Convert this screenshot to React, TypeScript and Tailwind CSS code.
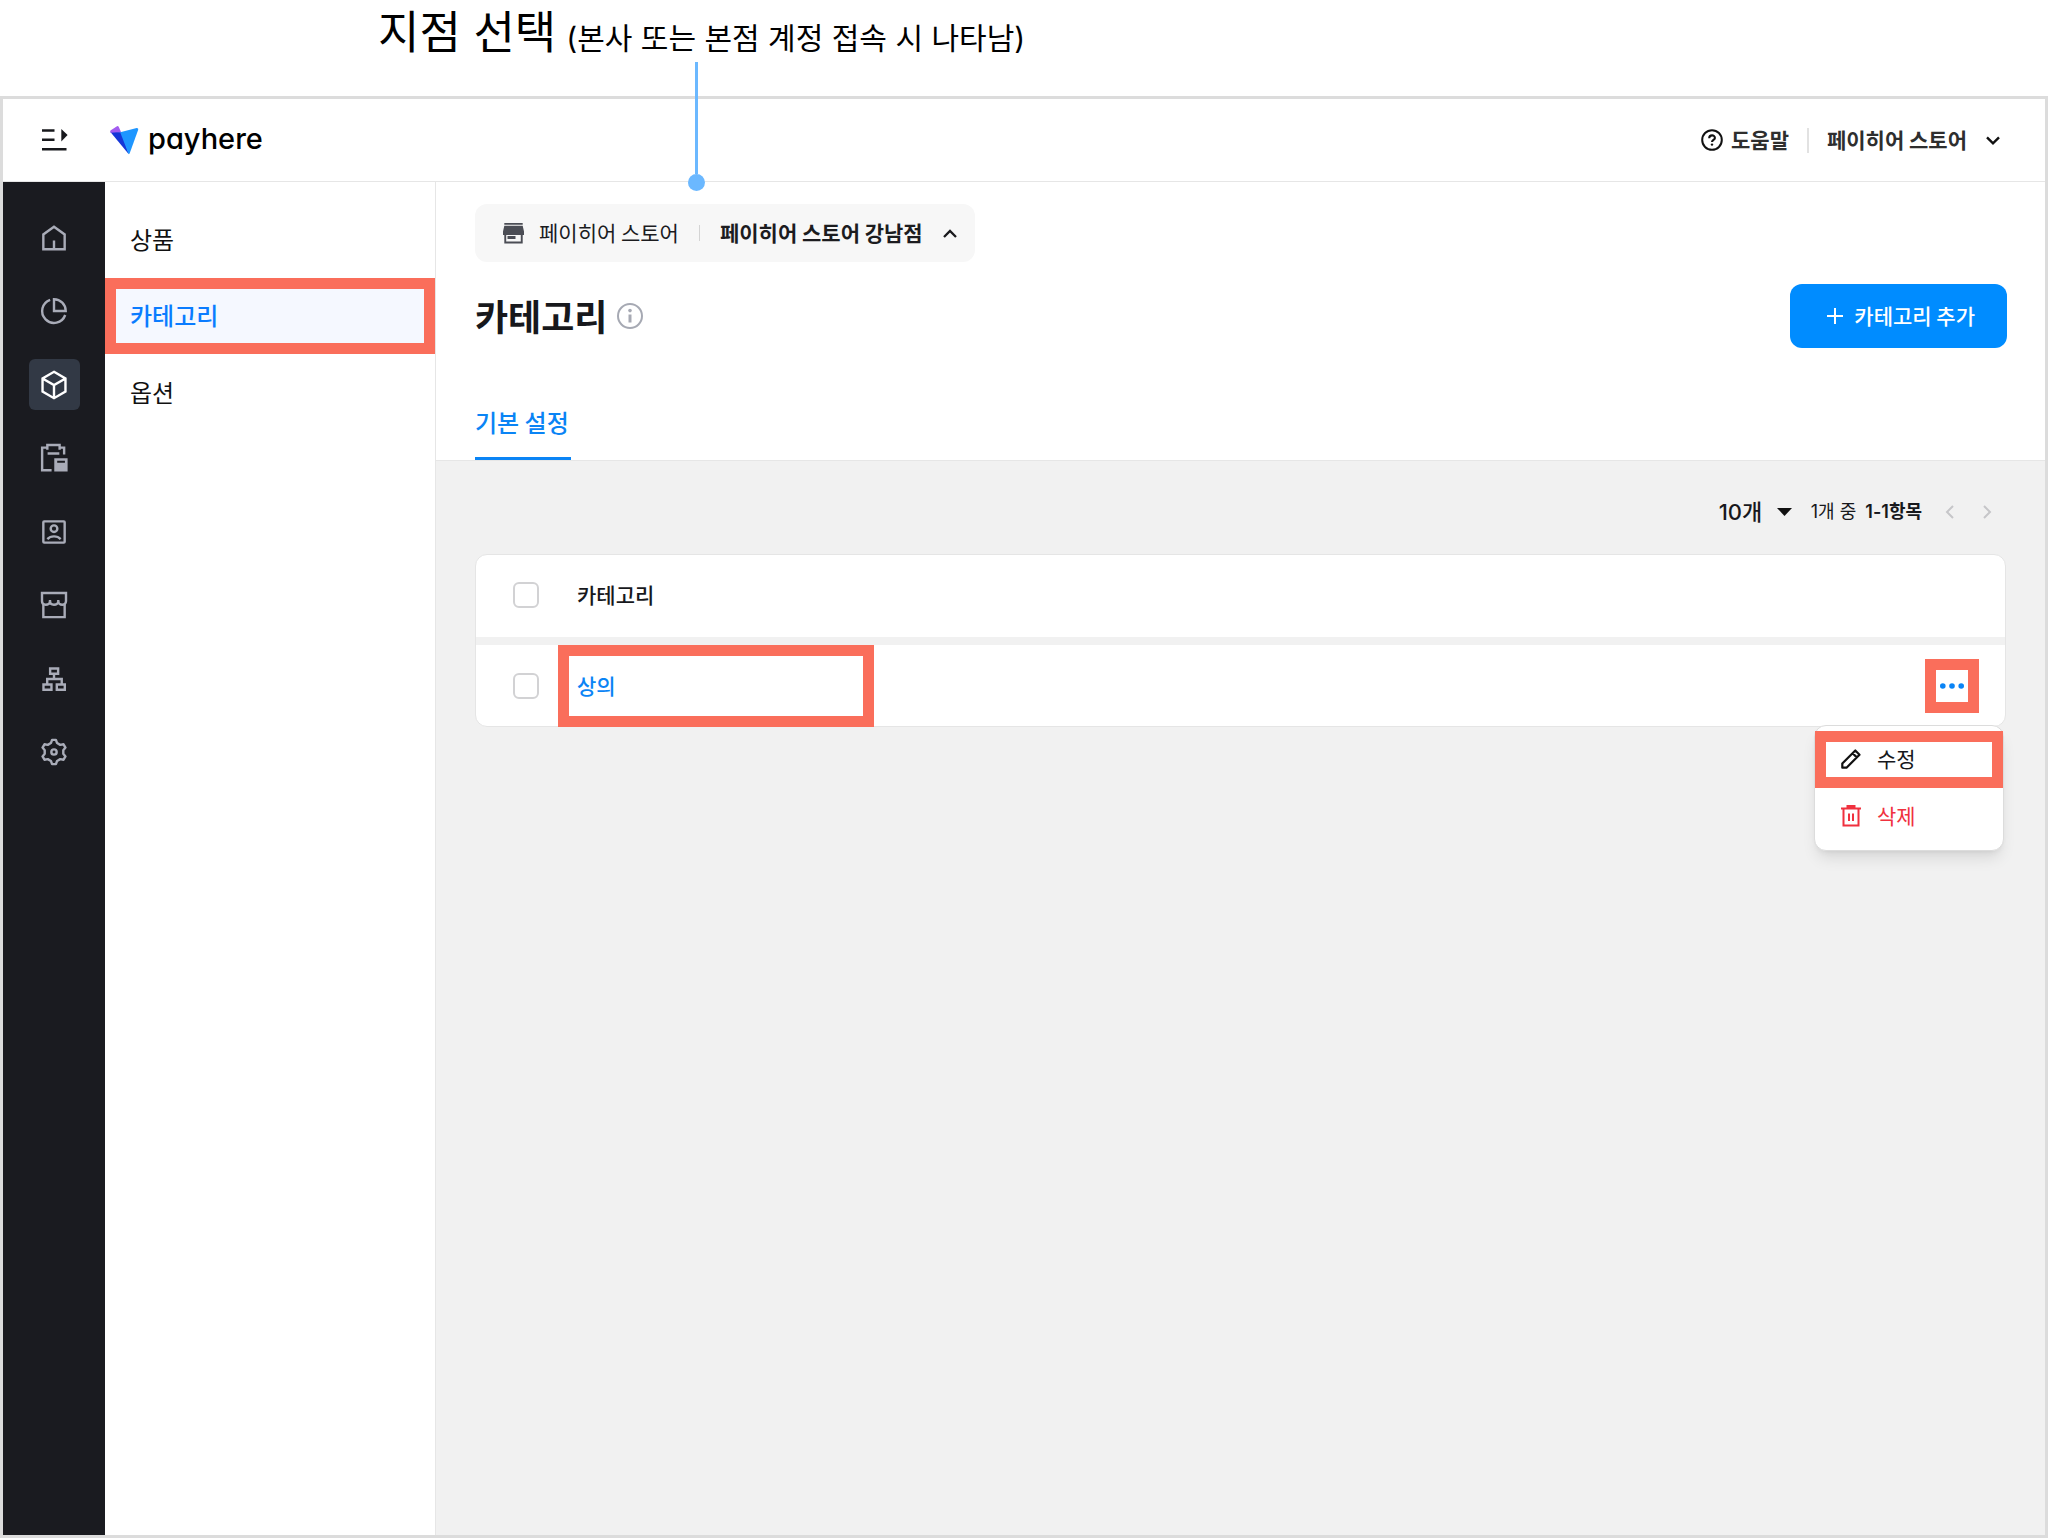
import type { ReactNode } from "react";

function NavSvg({ children }: { children: ReactNode }) {
  return (
    <svg viewBox="0 0 24 24" className="size-8" fill="none" stroke="currentColor" strokeWidth="1.8" aria-hidden="true">
      {children}
    </svg>
  );
}

function gearPath() {
  const points: string[] = [];
  const shape: [number, number][] = [
    [-19, 7.1],
    [-9, 9.2],
    [9, 9.2],
    [19, 7.1],
  ];
  for (let tooth = 0; tooth < 6; tooth++) {
    for (const [offset, radius] of shape) {
      const a = ((tooth * 60 + offset - 90) * Math.PI) / 180;
      points.push(`${(12 + radius * Math.cos(a)).toFixed(2)} ${(12 + radius * Math.sin(a)).toFixed(2)}`);
    }
  }
  return `M${points.join("L")}Z`;
}

const navItems: { label: string; active?: boolean; icon: ReactNode }[] = [
  {
    label: "홈",
    icon: <path d="M4 20.4V9.3L12 3.6l8 5.7v11.1zM12 20.4v-6.6" />,
  },
  {
    label: "매출",
    icon: (
      <>
        <path d="M12 3.2V12H20.8A8.8 8.8 0 0 0 12 3.2Z" />
        <path d="M9.1 3.6A8.9 8.9 0 1 0 20.4 15" />
      </>
    ),
  },
  {
    label: "상품",
    active: true,
    icon: <path d="M12 2.1l8.6 5v9.9L12 21.9 3.4 17V7.1zM3.4 7.1 12 12l8.6-4.9M12 12v9.9" />,
  },
  {
    label: "주문",
    icon: (
      <>
        <path d="M10.2 21.2H3.1V4.2H7V2.3h9.2v1.9h3.4v5.2M7 4v1.9M16.2 4v1.9M7.2 8.6H16" />
        <path fill="currentColor" stroke="none" fillRule="evenodd" d="M12.2 12.2h10v10h-10zM14.4 14v1.5h5.8V14z" />
      </>
    ),
  },
  {
    label: "고객",
    icon: (
      <>
        <rect x="4" y="4" width="16" height="16" rx="0.6" />
        <circle cx="12" cy="9.5" r="2.5" />
        <path d="M7 17.3c2.6-2.7 7.4-2.7 10 0" />
      </>
    ),
  },
  {
    label: "매장",
    icon: (
      <>
        <path d="M3 3h18v6.2c0 1.5-1.2 2.6-2.8 2.6s-3-1.1-3-2.6c0 1.5-1.4 2.6-3.2 2.6S9 10.7 9 9.2c0 1.5-1.4 2.6-3.2 2.6S3 10.7 3 9.2z" />
        <path d="M9 9.6V8.3M15.2 9.6V8.3M4 11.5v9.6h16v-9.6" />
      </>
    ),
  },
  {
    label: "조직",
    icon: <path d="M9.1 4.1h6v4h-6zM4.1 16.1h6v4h-6zM14.1 16.1h6v4h-6zM12 8.1V12M6.9 16.1V12h10.9v4.1" />,
  },
  {
    label: "설정",
    icon: (
      <>
        <path d={gearPath()} strokeLinejoin="round" />
        <circle cx="12" cy="12" r="2" />
      </>
    ),
  },
];

function Highlight({ className }: { className: string }) {
  return <span aria-hidden="true" className={`pointer-events-none absolute border-[#fa6e5b] ${className}`} />;
}

function Caption() {
  return (
    <div className="relative flex h-24 shrink-0 items-baseline pl-[378px] font-[Inter,'Noto_Sans_CJK_KR',sans-serif] leading-[66px] text-black">
      <h2 className="text-[45px]">지점 선택</h2>
      <p className="ml-[10px] text-[30px]">(본사 또는 본점 계정 접속 시 나타남)</p>
      <span className="absolute top-[62px] left-[688px] z-20 flex w-[17px] flex-col items-center" aria-hidden="true">
        <span className="h-28 w-[3px] bg-[#6bb8ff]" />
        <span className="size-[17px] rounded-full bg-[#6bb8ff]" />
      </span>
    </div>
  );
}

function TopBar() {
  return (
    <header className="flex h-[83px] shrink-0 items-center border-b border-[#e6e6e6] pr-[45px] pl-[39px] text-[#2e2e2e]">
      <button type="button" aria-label="메뉴 열기">
        <svg width="26" height="24" viewBox="0 0 26 24" aria-hidden="true">
          <path d="M0 2.5h12.5M0 11.8h12.5M0 21.2h24.5" stroke="#17181c" strokeWidth="2.6" />
          <path d="M19.3 1v12.5L25.6 7z" fill="#17181c" />
        </svg>
      </button>
      <a href="#" className="ml-[42px] flex items-center gap-[9px] text-black">
        <svg width="29" height="29" viewBox="0 0 29 29" aria-hidden="true">
          <path d="M.2 5.8 12 6.2 18.8 28.2z" fill="#1536d8" />
          <path d="M10.2 6.2 26.7 2.1Q28.6 2 28.2 3.8L19.7 27.2Q19.1 28.6 18.4 27.4z" fill="#1e96ff" />
          <path d="M.8 4.3 7 .2Q8.2-.2 8.8 1l2.2 5L.6 6.7Q-.3 5.2.8 4.3Z" fill="#a35cf0" />
        </svg>
        <span className="pb-0.5 font-[Inter] text-[29px] leading-8 font-medium [font-feature-settings:'cv11']">payhere</span>
      </a>
      <div className="ml-auto flex items-center text-[21px] leading-8 font-bold">
        <a href="#" className="flex items-center gap-[7px]">
          <svg width="24" height="24" viewBox="0 0 24 24" fill="none" stroke="#111" strokeWidth="2" aria-hidden="true">
            <circle cx="12" cy="12" r="9.8" />
            <path d="M9.2 10.2c0-3.7 5.7-3.7 5.7-.3 0 1.9-2.9 2.2-2.9 4.1" strokeWidth="2.1" />
            <circle cx="12" cy="16.6" r="1.2" fill="#111" stroke="none" />
          </svg>
          <span className="pb-0.5">도움말</span>
        </a>
        <span className="mx-[18px] h-[25px] w-0.5 bg-[#e2e2e2]" />
        <button type="button" className="flex items-center gap-[19px]">
          <span className="pb-0.5">페이히어 스토어</span>
          <svg width="14" height="9" viewBox="0 0 14 9" fill="none" stroke="#111" strokeWidth="2.4" aria-hidden="true">
            <path d="m1 1.3 6 6 6-6" />
          </svg>
        </button>
      </div>
    </header>
  );
}

function SideNav() {
  return (
    <nav aria-label="주 메뉴" className="w-[102px] shrink-0 bg-[#1a1b20] pt-[30px]">
      <ul className="flex h-[566px] flex-col items-center justify-between">
        {navItems.map((item) => (
          <li key={item.label}>
            <a
              href="#"
              aria-label={item.label}
              aria-current={item.active ? "page" : undefined}
              className={
                item.active
                  ? "flex size-[51px] items-center justify-center rounded-md bg-[#323945] text-white"
                  : "flex size-[51px] items-center justify-center rounded-md text-[#a9acb8]"
              }
            >
              <NavSvg>{item.icon}</NavSvg>
            </a>
          </li>
        ))}
      </ul>
    </nav>
  );
}

function SubNav() {
  return (
    <nav aria-label="상품 메뉴" className="w-[331px] shrink-0 border-r border-[#e6e6e6] bg-white pt-5 text-2xl text-[#111]">
      <a href="#" className="flex h-19 items-center pb-0.5 pl-[25px]">
        상품
      </a>
      <a
        href="#"
        aria-current="page"
        className="relative flex h-19 items-center bg-[#f5f8ff] pb-0.5 pl-[25px] font-medium text-[#0a7cff]"
      >
        카테고리
        <Highlight className="inset-0 border-[11px]" />
      </a>
      <a href="#" className="flex h-19 items-center pl-[25px]">
        옵션
      </a>
    </nav>
  );
}

function StoreSelector() {
  return (
    <button
      type="button"
      aria-expanded="true"
      className="mt-[22px] flex h-[58px] items-center rounded-xl bg-[#f7f7f7] pr-[18px] pl-7 text-[21px] leading-8 text-[#1c1c1f]"
    >
      <svg width="21" height="21" viewBox="0 0 21 21" fill="#4b4d55" aria-hidden="true">
        <path d="M1.3 0h18.4v1.7H1.3zM1.3 2.7h18.4L21 8.5V12h-1.3v8.5H1.3V12H0V8.5zM3.2 12v6.5h14.6V12z" fillRule="evenodd" />
        <path d="M4.5 13h8v3h-8z" />
      </svg>
      <span className="ml-[15px] pb-0.5">페이히어 스토어</span>
      <span className="mx-5 h-4 w-px bg-[#d4d4d4]" />
      <span className="pb-0.5 font-bold">페이히어 스토어 강남점</span>
      <svg width="14" height="9" viewBox="0 0 14 9" fill="none" stroke="#1a1a1d" strokeWidth="2.3" className="ml-5" aria-hidden="true">
        <path d="m1 8 6-6 6 6" />
      </svg>
    </button>
  );
}

function Pager() {
  return (
    <div className="flex items-center justify-end pr-[15px] text-[#17181c]">
      <div className="relative mr-[19px]">
        <select
          aria-label="페이지당 항목 수"
          defaultValue="10"
          className="block w-[73px] appearance-none bg-transparent font-[Inter,'Noto_Sans_CJK_KR',sans-serif] text-[22px] leading-8 font-medium"
        >
          <option value="10">10개</option>
        </select>
        <svg width="15" height="8" viewBox="0 0 15 8" className="pointer-events-none absolute top-3 right-0" fill="#111" aria-hidden="true">
          <path d="M0 0h15L7.5 8z" />
        </svg>
      </div>
      <p className="font-[Inter,'Noto_Sans_CJK_KR',sans-serif] text-lg leading-8">
        1개 중 <b className="ml-1 font-semibold">1-1항목</b>
      </p>
      <button type="button" aria-label="이전" className="ml-[23px]">
        <svg width="9" height="14" viewBox="0 0 9 14" fill="none" stroke="#c6c6c9" strokeWidth="2" aria-hidden="true">
          <path d="M8 1 2 7l6 6" />
        </svg>
      </button>
      <button type="button" aria-label="다음" className="ml-[29px]">
        <svg width="9" height="14" viewBox="0 0 9 14" fill="none" stroke="#c6c6c9" strokeWidth="2" aria-hidden="true">
          <path d="m1 1 6 6-6 6" />
        </svg>
      </button>
    </div>
  );
}

function RowMenu() {
  return (
    <div
      role="menu"
      className="absolute top-[66px] right-[-25px] z-10 w-[190px] rounded-xl border border-[#dcdcdc] bg-white py-[5px] text-left text-[21px] leading-8 shadow-lg"
    >
      <button type="button" role="menuitem" className="relative flex h-[57px] w-full items-center gap-4 pl-[26px] text-[#17181c]">
        <svg width="20" height="20" viewBox="0 0 20 20" fill="none" stroke="#111" strokeWidth="2.2" strokeLinejoin="round" aria-hidden="true">
          <path d="M1.3 18.7v-4.2L14.3 1.5l4.2 4.2-13 13zM11.6 4.2l4.2 4.2" />
        </svg>
        <span className="pb-0.5">수정</span>
        <Highlight className="inset-0 border-[11px]" />
      </button>
      <button type="button" role="menuitem" className="flex h-[57px] w-full items-center gap-4 pl-[26px] text-[#f0313f]">
        <svg width="20" height="22" viewBox="0 0 20 22" fill="none" stroke="currentColor" strokeWidth="2" aria-hidden="true">
          <path d="M0 3.6h20M2.5 3.6v17h15v-17M8 8.5V16M12 8.5V16" />
          <path d="M5.5 0h9v3h-9z" fill="currentColor" stroke="none" />
        </svg>
        <span className="pb-0.5">삭제</span>
      </button>
    </div>
  );
}

const checkboxClass = "block size-[26px] appearance-none rounded-md border-2 border-[#d2d2d4] bg-white";

function CategoryTable() {
  return (
    <div className="mt-[26px] mr-px rounded-xl border border-[#e5e5e5] bg-white">
      <table className="w-full border-separate border-spacing-0 text-[21px] leading-8">
        <thead>
          <tr>
            <th className="h-[90px] w-[82px] border-b-8 border-[#f1f1f1] p-0 pb-0.5 pl-[37px]">
              <input type="checkbox" aria-label="전체 선택" className={checkboxClass} />
            </th>
            <th scope="col" className="border-b-8 border-[#f1f1f1] p-0 pb-1 pl-[19px] text-left font-medium text-[#17181c]">
              카테고리
            </th>
            <th className="w-20 border-b-8 border-[#f1f1f1] p-0" aria-label="작업" />
          </tr>
        </thead>
        <tbody>
          <tr>
            <td className="h-[81px] p-0 pl-[37px]">
              <input type="checkbox" aria-label="상의 선택" className={checkboxClass} />
            </td>
            <td className="relative p-0 pb-0.5 pl-[19px]">
              <a href="#" className="font-medium text-[#0a84f5]">
                상의
              </a>
              <Highlight className="top-0 -bottom-px left-0 w-[316px] border-[11px]" />
            </td>
            <td className="p-0">
              <div className="relative size-[54px]">
                <button type="button" aria-label="더보기" className="flex size-full items-center justify-center">
                  <svg width="24" height="6" viewBox="0 0 24 6" fill="#0a84f5" aria-hidden="true">
                    <circle cx="2.8" cy="3" r="2.8" />
                    <circle cx="12" cy="3" r="2.8" />
                    <circle cx="21.2" cy="3" r="2.8" />
                  </svg>
                </button>
                <Highlight className="inset-0 border-[11px]" />
                <RowMenu />
              </div>
            </td>
          </tr>
        </tbody>
      </table>
    </div>
  );
}

export default function App() {
  return (
    <div className="flex min-h-screen flex-col bg-white font-['Noto_Sans_CJK_KR',sans-serif]">
      <Caption />
      <div className="flex flex-1 flex-col border-[3px] border-[#dcdcdc]">
        <TopBar />
        <div className="flex flex-1">
          <SideNav />
          <SubNav />
          <main className="flex min-w-0 flex-1 flex-col">
            <section className="flex flex-col items-start border-b border-[#e6e6e6] pr-[38px] pl-[39px]">
              <StoreSelector />
              <div className="mt-[22px] flex w-full items-center">
                <h1 className="pb-0.5 text-4xl leading-[62px] font-bold text-[#17181c]">카테고리</h1>
                <button type="button" aria-label="정보" className="ml-[9px]">
                  <svg width="28" height="28" viewBox="0 0 28 28" fill="none" stroke="#a6a9b3" aria-hidden="true">
                    <circle cx="14" cy="14" r="12" strokeWidth="2" />
                    <path d="M14 12.5v8" strokeWidth="3" />
                    <circle cx="14" cy="8.6" r="1.8" fill="#a6a9b3" stroke="none" />
                  </svg>
                </button>
                <button
                  type="button"
                  className="ml-auto flex h-16 items-center gap-[11px] rounded-xl bg-[#008cff] pr-8 pl-[37px] text-[21px] leading-8 font-medium text-white"
                >
                  <svg width="16" height="16" viewBox="0 0 16 16" stroke="currentColor" strokeWidth="2" aria-hidden="true">
                    <path d="M8 0v16M0 8h16" />
                  </svg>
                  <span className="pb-0.5">카테고리 추가</span>
                </button>
              </div>
              <div role="tablist" className="mt-[41px]">
                <button
                  type="button"
                  role="tab"
                  aria-selected="true"
                  className="h-[71px] border-b-[3px] border-[#0a84f5] pr-0.5 pb-0.5 text-2xl font-medium text-[#0a84f5]"
                >
                  기본 설정
                </button>
              </div>
            </section>
            <section className="flex-1 bg-[#f1f1f1] pt-[35px] pr-[38px] pb-10 pl-[39px]">
              <Pager />
              <CategoryTable />
            </section>
          </main>
        </div>
      </div>
    </div>
  );
}
